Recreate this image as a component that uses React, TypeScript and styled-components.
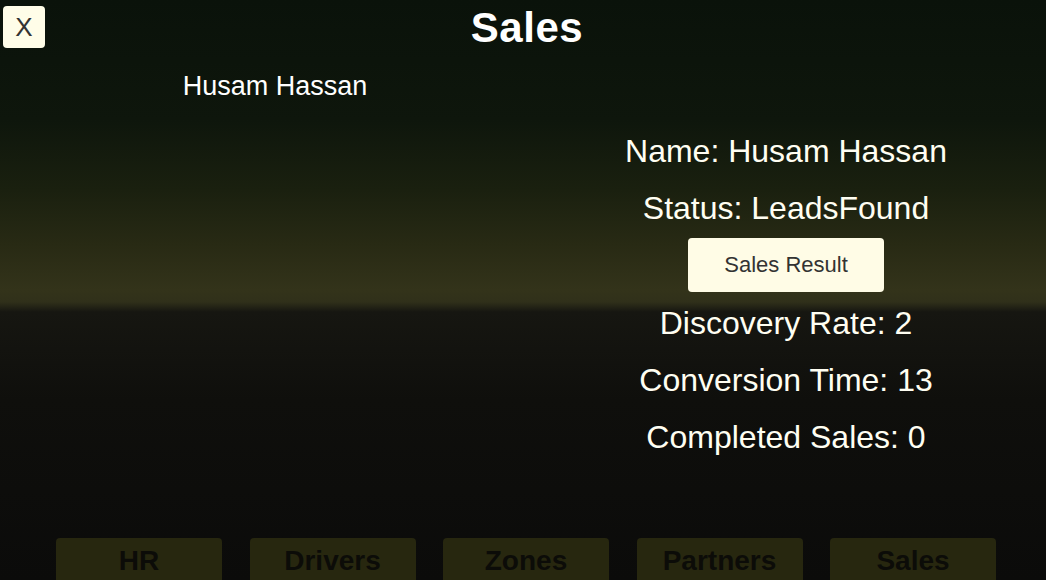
import React from "react";
import styled, { createGlobalStyle } from "styled-components";

const GlobalStyle = createGlobalStyle`
  html, body {
    margin: 0;
    padding: 0;
    background: #0a0a0a;
  }
  body {
    font-family: "Liberation Sans", Arial, sans-serif;
  }
`;

const Page = styled.div`
  width: 1046px;
  height: 580px;
  overflow: hidden;
  display: grid;
  grid-template-rows: 56px 1fr 42px;
  background: linear-gradient(
    to bottom,
    #0a120a 0px,
    #0e160c 120px,
    #1a200f 190px,
    #282a14 245px,
    #33331a 290px,
    #30301a 302px,
    #161611 312px,
    #0f0f0c 400px,
    #0b0b0a 580px
  );
  font-family: "Liberation Sans", Arial, sans-serif;
`;

const Header = styled.header`
  display: grid;
  grid-template-columns: 1fr auto 1fr;
  align-items: start;
  padding: 6px 3px 0;
`;

const CloseButton = styled.button`
  justify-self: start;
  width: 42px;
  height: 42px;
  padding: 0;
  border: none;
  border-radius: 4px;
  background: #fffde8;
  color: #333333;
  font-family: "Liberation Sans", Arial, sans-serif;
  font-size: 26px;
  line-height: 42px;
  cursor: pointer;
`;

const Title = styled.h1`
  margin: 0;
  padding-left: 8px;
  color: #ffffff;
  font-size: 42px;
  font-weight: 700;
  line-height: 44px;
  letter-spacing: 0.5px;
`;

const Main = styled.main`
  display: grid;
  grid-template-columns: 550px 1fr;
`;

const LeftColumn = styled.section`
  display: flex;
  flex-direction: column;
  align-items: center;
  padding-top: 14px;
`;

const AgentName = styled.div`
  color: #ffffff;
  font-size: 27px;
  line-height: 32px;
`;

const RightColumn = styled.section`
  display: flex;
  flex-direction: column;
  align-items: center;
  padding-top: 67px;
  padding-right: 24px;
`;

const InfoLine = styled.div`
  color: #fffef2;
  font-size: 32px;
  line-height: 57px;
  white-space: nowrap;
`;

const ActionButton = styled.button`
  width: 196px;
  height: 54px;
  margin: 1px 0 3px;
  border: none;
  border-radius: 4px;
  background: #fffce6;
  color: #333333;
  font-family: "Liberation Sans", Arial, sans-serif;
  font-size: 22px;
  cursor: pointer;
`;

const Nav = styled.nav`
  display: flex;
  justify-content: center;
  align-items: flex-start;
  gap: 27.5px;
  padding-left: 6px;
`;

const NavButton = styled.button`
  flex: 0 0 166px;
  height: 50px;
  border: none;
  border-radius: 4px;
  background: #27270f;
  color: #0c0c08;
  font-family: "Liberation Sans", Arial, sans-serif;
  font-size: 28px;
  font-weight: 700;
  line-height: 32px;
  padding: 0 0 5px;
  cursor: pointer;
`;

const tabs = ["HR", "Drivers", "Zones", "Partners", "Sales"];

export default function App() {
  return (
    <>
      <GlobalStyle />
      <Page>
        <Header>
          <CloseButton>X</CloseButton>
          <Title>Sales</Title>
          <div />
        </Header>
        <Main>
          <LeftColumn>
            <AgentName>Husam Hassan</AgentName>
          </LeftColumn>
          <RightColumn>
            <InfoLine>Name: Husam Hassan</InfoLine>
            <InfoLine>Status: LeadsFound</InfoLine>
            <ActionButton>Sales Result</ActionButton>
            <InfoLine>Discovery Rate: 2</InfoLine>
            <InfoLine>Conversion Time: 13</InfoLine>
            <InfoLine>Completed Sales: 0</InfoLine>
          </RightColumn>
        </Main>
        <Nav>
          {tabs.map((t) => (
            <NavButton key={t}>{t}</NavButton>
          ))}
        </Nav>
      </Page>
    </>
  );
}
